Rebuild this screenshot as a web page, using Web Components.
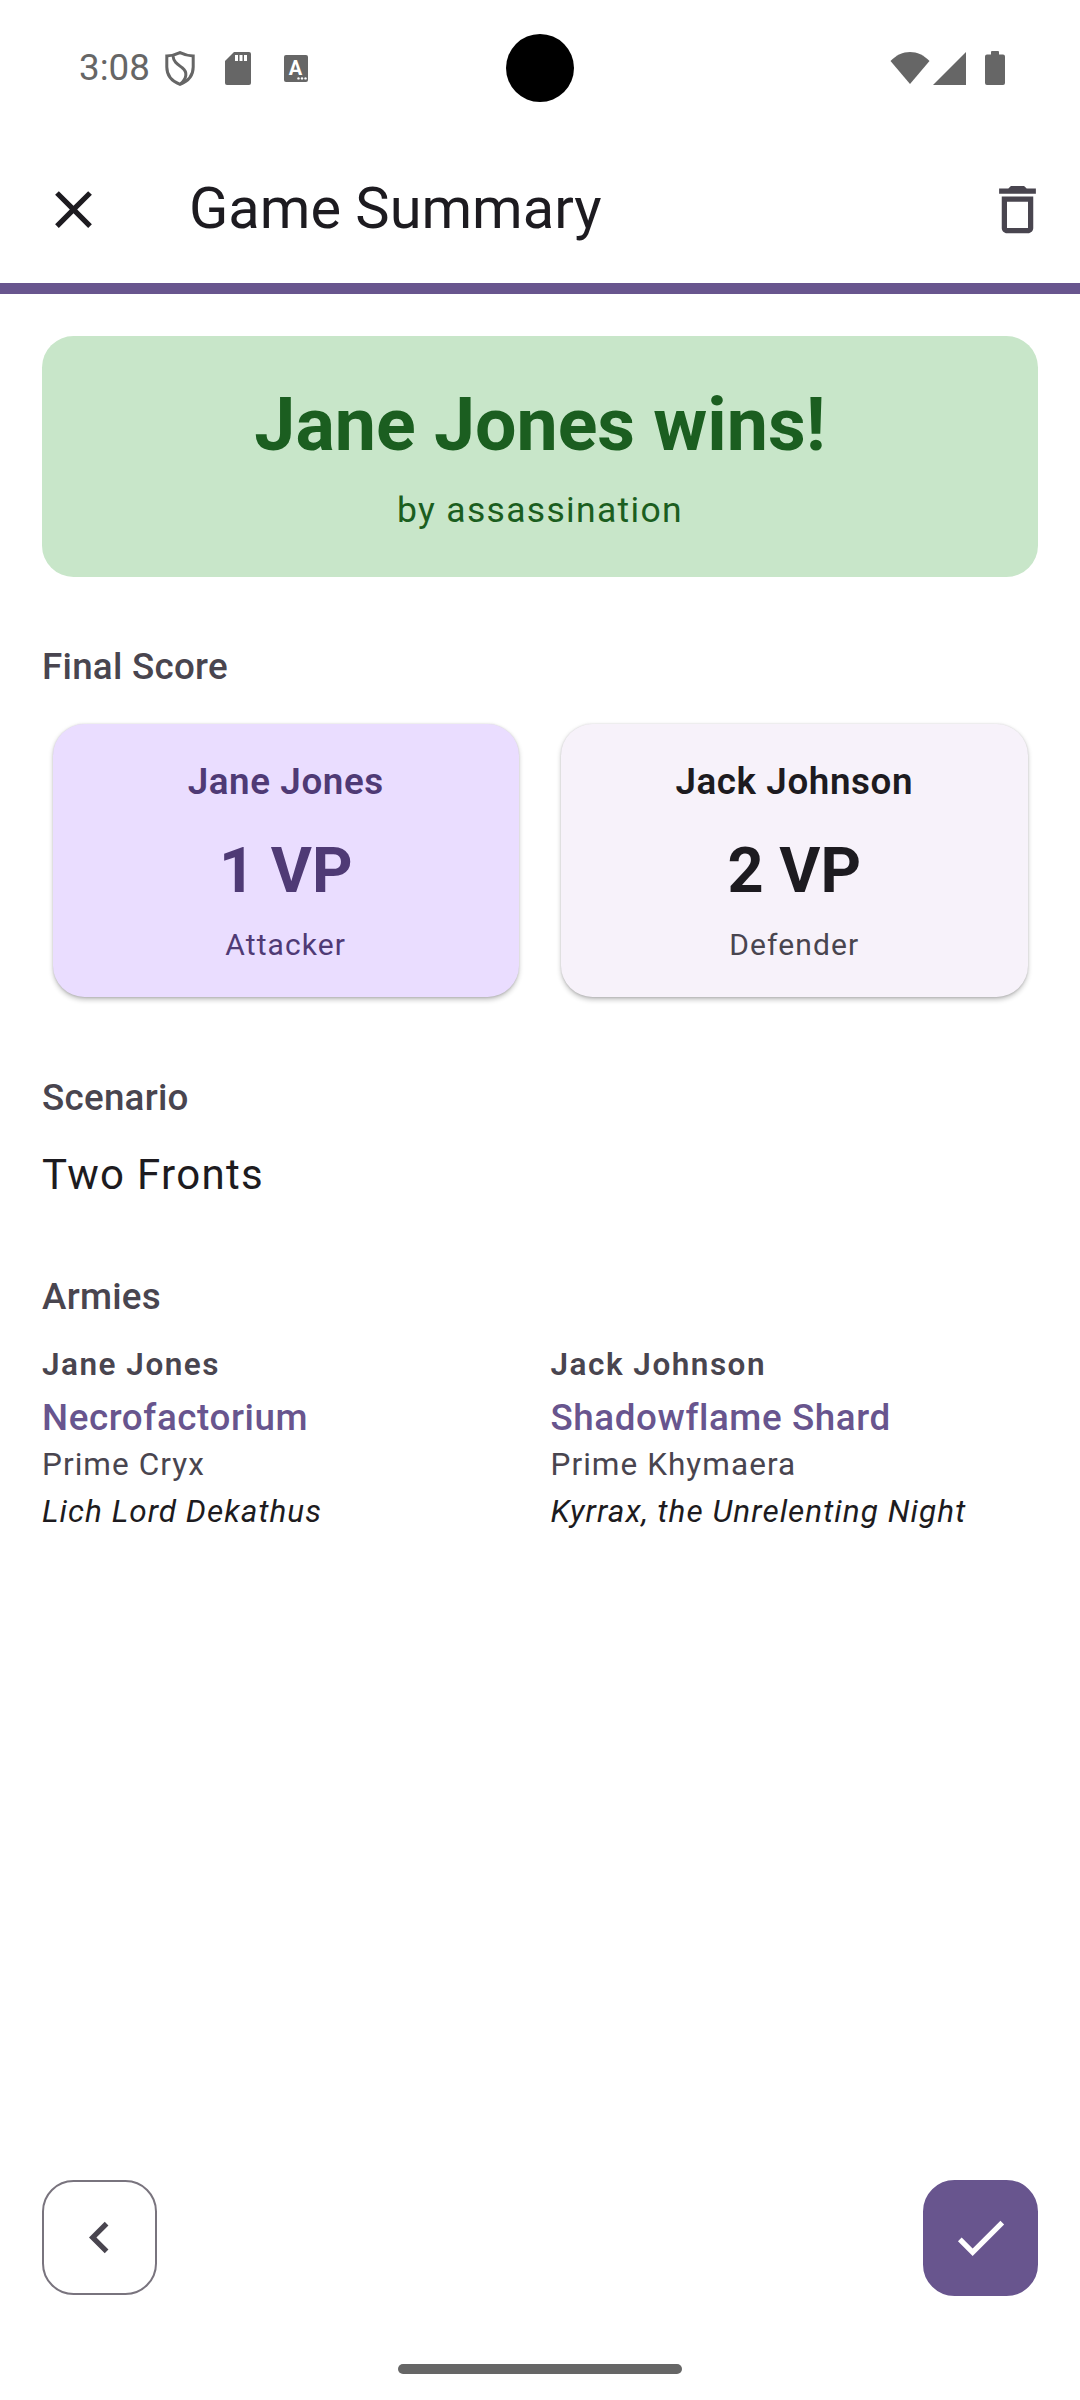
<!DOCTYPE html>
<html lang="en">
<head>
<meta charset="utf-8">
<title>Game Summary</title>
<style>
  html, body { margin: 0; background: #fff; }
  body { font-family: Roboto, "Liberation Sans", sans-serif; }
</style>
</head>
<body>
<summary-page></summary-page>
<script>
const define = (tag, html) => {
  const template = document.createElement('template');
  template.innerHTML = html;
  customElements.define(tag, class extends HTMLElement {
    constructor() {
      super();
      this.attachShadow({ mode: 'open' }).appendChild(template.content.cloneNode(true));
    }
  });
};

define('status-bar', `
  <style>
    :host {
      display: flex;
      align-items: center;
      position: relative;
      height: 136px;
      padding: 0 75px 0 79px;
      color: #666;
      font-size: 36.75px;
      line-height: 136px;
    }
    svg { display: block; fill: #666; flex: none; }
    .shield { margin-left: 15px; }
    .sd { margin-left: 30px; }
    .font { margin-left: 33px; }
    .right { display: flex; align-items: center; margin-left: auto; }
    .signal { margin-left: 3px; }
    .battery { margin-left: 19px; }
    .camera {
      position: absolute;
      left: 506px;
      top: 33.5px;
      width: 68px;
      height: 68px;
      border-radius: 50%;
      background: #000;
    }
  </style>
  <span>3:08</span>
  <svg class="shield" width="30" height="35" viewBox="0 0 30 35">
    <path d="M15 1.6 C19 3.6 24 4.8 28.2 5 V16 C28.2 24.5 22.5 30.5 15 33.4 C7.5 30.5 1.8 24.5 1.8 16 V5 C6 4.8 11 3.6 15 1.6Z" fill="none" stroke="#666" stroke-width="3"/>
    <path d="M8 5 C8.5 11 13 13.5 17.5 17 C22.5 21 22 27.5 15.5 33" fill="none" stroke="#666" stroke-width="3"/>
  </svg>
  <svg class="sd" width="26" height="33" viewBox="0 0 26 33">
    <path d="M9 0H24a2 2 0 0 1 2 2V31a2 2 0 0 1-2 2H2a2 2 0 0 1-2-2V9Z"/>
    <path d="M10 3h3v6h-3zM14.5 3h3v6h-3zM19 3h3v6h-3z" fill="#fff"/>
  </svg>
  <svg class="font" width="24" height="27" viewBox="0 0 24 27">
    <rect width="24" height="27" rx="2"/>
    <text x="11.500" y="19.500" text-anchor="middle" font-family="Roboto" font-weight="700" font-size="20" fill="#fff">A</text>
    <circle cx="14.5" cy="23.4" r="1.2" fill="#fff"/>
    <circle cx="18" cy="23.4" r="1.2" fill="#fff"/>
    <circle cx="21.5" cy="23.4" r="1.2" fill="#fff"/>
  </svg>
  <div class="camera"></div>
  <div class="right">
    <svg width="40" height="32" viewBox="0 0 40 32">
      <path d="M.5 9C6 3.2 13 0 20 0s14 3.2 19.500 9L20 32Z"/>
    </svg>
    <svg class="signal" width="33" height="33" viewBox="0 0 33 33">
      <path d="M33 0V33H0Z"/>
    </svg>
    <svg class="battery" width="20" height="34" viewBox="0 0 20 34">
      <path d="M6 3.500V1a1 1 0 0 1 1-1h6a1 1 0 0 1 1 1v2.500h4a2 2 0 0 1 2 2V32a2 2 0 0 1-2 2H2a2 2 0 0 1-2-2V5.500a2 2 0 0 1 2-2Z"/>
    </svg>
  </div>
`);

define('app-bar', `
  <style>
    :host {
      display: flex;
      align-items: center;
      height: 147px;
      color: #1d1b20;
      font-size: 57.75px;
      line-height: 72px;
    }
    svg { display: block; flex: none; width: 63px; height: 63px; }
    .close { margin: 0 84px 0 42px; fill: #1d1b20; }
    .title { margin-bottom: 3px; }
    .delete { margin: 0 31.5px 0 auto; fill: #49454f; }
  </style>
  <svg class="close" viewBox="0 0 24 24">
    <path d="M19 6.410L17.590 5 12 10.590 6.410 5 5 6.410 10.590 12 5 17.590 6.410 19 12 13.410 17.590 19 19 17.590 13.410 12z"/>
  </svg>
  <div class="title"><slot></slot></div>
  <svg class="delete" viewBox="0 0 24 24">
    <path d="M6 19c0 1.100.9 2 2 2h8c1.100 0 2-.9 2-2V7H6v12zM8 9h8v10H8V9zm7.500-5l-1-1h-5l-1 1H5v2h14V4z"/>
  </svg>
`);

define('progress-line', `
  <style>
    :host { display: block; height: 10.5px; background: #68558e; }
  </style>
`);

define('winner-banner', `
  <style>
    :host {
      display: block;
      padding: 42px 42px 35.5px;
      border-radius: 31.5px;
      background: #c8e6c9;
      color: #1b5e20;
      text-align: center;
    }
    .title { font-size: 73.5px; line-height: 94.5px; font-weight: 700; }
    .sub { margin-top: 6.5px; font-size: 35.5px; line-height: 63px; letter-spacing: 1.31px; }
  </style>
  <div class="title"><slot name="title"></slot></div>
  <div class="sub"><slot name="sub"></slot></div>
`);

define('section-label', `
  <style>
    :host {
      display: block;
      color: #49454f;
      font-size: 36.75px;
      line-height: 52.5px;
      font-weight: 500;
      letter-spacing: .26px;
    }
  </style>
  <slot></slot>
`);

define('score-card', `
  <style>
    :host {
      display: block;
      margin: 10.5px;
      padding: 31.5px;
      border-radius: 31.5px;
      background: #f7f2fa;
      color: #1d1b20;
      text-align: center;
      box-shadow: 0 2.6px 5px rgba(0, 0, 0, .22), 0 .5px 2px rgba(0, 0, 0, .12);
    }
    :host([winner]) { background: #eaddff; color: #4f3a75; }
    .name { font-size: 36.75px; line-height: 52.5px; font-weight: 600; letter-spacing: .6px; }
    .score { margin-top: 21px; font-size: 63px; line-height: 84px; font-weight: 700; }
    .role { margin-top: 10.5px; font-size: 30px; line-height: 42px; letter-spacing: 1.1px; color: #49454f; }
    :host([winner]) .role { color: inherit; }
  </style>
  <div class="name"><slot name="name"></slot></div>
  <div class="score"><slot name="score"></slot></div>
  <div class="role"><slot name="role"></slot></div>
`);

define('army-entry', `
  <style>
    :host { display: block; }
    .player { font-size: 31.5px; line-height: 42px; font-weight: 600; letter-spacing: 1.5px; color: #49454f; }
    .faction { margin-top: 6px; font-size: 36.75px; line-height: 52.5px; font-weight: 500; letter-spacing: .6px; color: #68558e; }
    .prime { font-size: 31.5px; line-height: 42px; letter-spacing: 1.05px; color: #49454f; }
    .leader { margin-top: 4.5px; font-size: 31.5px; line-height: 42px; letter-spacing: 1.05px; font-style: italic; color: #1d1b20; }
  </style>
  <div class="player"><slot name="player"></slot></div>
  <div class="faction"><slot name="faction"></slot></div>
  <div class="prime"><slot name="prime"></slot></div>
  <div class="leader"><slot name="leader"></slot></div>
`);

define('icon-button', `
  <style>
    :host {
      display: flex;
      align-items: center;
      justify-content: center;
      box-sizing: border-box;
      width: 114.5px;
      height: 114.5px;
      border-radius: 31.5px;
      border: 2.6px solid #79747e;
      color: #49454f;
    }
    :host([filled]) {
      width: 115.5px;
      height: 115.5px;
      background: #68558e;
      border-color: #68558e;
      color: #fff;
    }
  </style>
  <slot></slot>
`);

define('summary-page', `
  <style>
    :host {
      display: flex;
      flex-direction: column;
      height: 2400px;
      overflow: hidden;
    }
    main { padding: 42px 42px 0; }
    .after-banner { margin-top: 64px; }
    .scores {
      display: grid;
      grid-template-columns: 1fr 1fr;
      gap: 21px;
      margin-top: 20px;
    }
    .scenario { margin-top: 64px; }
    .value {
      margin-top: 18.5px;
      color: #1d1b20;
      font-size: 42px;
      line-height: 63px;
      letter-spacing: 1.31px;
    }
    .armies-label { margin-top: 65.5px; }
    .armies {
      display: grid;
      grid-template-columns: 1fr 1fr;
      gap: 21px;
      margin-top: 20px;
    }
    footer {
      display: flex;
      justify-content: space-between;
      align-items: flex-start;
      margin-top: auto;
      padding: 0 42px;
    }
    footer svg { display: block; width: 63px; height: 63px; fill: currentColor; }
    .home {
      align-self: center;
      width: 284px;
      height: 10.5px;
      margin: 68px 0 26px;
      border-radius: 6px;
      background: #666;
    }
  </style>
  <status-bar></status-bar>
  <app-bar>Game Summary</app-bar>
  <progress-line></progress-line>
  <main>
    <winner-banner>
      <span slot="title">Jane Jones wins!</span>
      <span slot="sub">by assassination</span>
    </winner-banner>
    <section-label class="after-banner">Final Score</section-label>
    <div class="scores">
      <score-card winner>
        <span slot="name">Jane Jones</span>
        <span slot="score">1 VP</span>
        <span slot="role">Attacker</span>
      </score-card>
      <score-card>
        <span slot="name">Jack Johnson</span>
        <span slot="score">2 VP</span>
        <span slot="role">Defender</span>
      </score-card>
    </div>
    <section-label class="scenario">Scenario</section-label>
    <div class="value">Two Fronts</div>
    <section-label class="armies-label">Armies</section-label>
    <div class="armies">
      <army-entry>
        <span slot="player">Jane Jones</span>
        <span slot="faction">Necrofactorium</span>
        <span slot="prime">Prime Cryx</span>
        <span slot="leader">Lich Lord Dekathus</span>
      </army-entry>
      <army-entry>
        <span slot="player">Jack Johnson</span>
        <span slot="faction">Shadowflame Shard</span>
        <span slot="prime">Prime Khymaera</span>
        <span slot="leader">Kyrrax, the Unrelenting Night</span>
      </army-entry>
    </div>
  </main>
  <footer>
    <icon-button>
      <svg viewBox="0 0 24 24"><path d="M15.410 7.410L14 6l-6 6 6 6 1.410-1.410L10.830 12z"/></svg>
    </icon-button>
    <icon-button filled>
      <svg viewBox="0 0 24 24"><path d="M9 16.170L4.830 12l-1.420 1.410L9 19 21 7l-1.410-1.410z"/></svg>
    </icon-button>
  </footer>
  <div class="home"></div>
`);
</script>
</body>
</html>
